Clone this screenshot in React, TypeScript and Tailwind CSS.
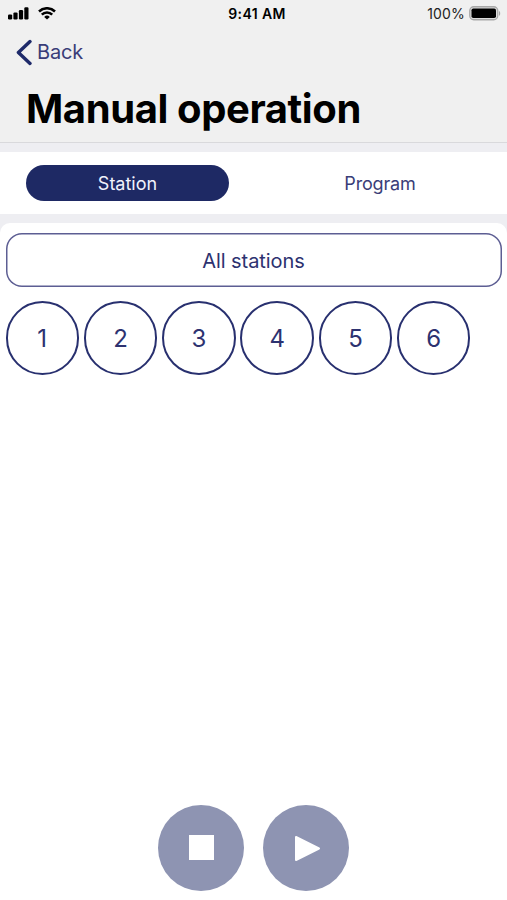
import React from "react";

const stations = [1, 2, 3, 4, 5, 6];

function StatusBar() {
  return (
    <div className="grid h-[27px] grid-cols-3 items-center pl-2 pr-[6px] text-black">
      <div className="flex items-center gap-[9px]">
        <svg width="21" height="13" viewBox="0 0 21 13" fill="currentColor">
          <rect x="0" y="7.4" width="4.2" height="5" rx="1.2" />
          <rect x="5.4" y="5.4" width="4.2" height="7" rx="1.2" />
          <rect x="10.9" y="3" width="4.2" height="9.4" rx="1.2" />
          <rect x="16.3" y="0.3" width="4.2" height="12.1" rx="1.2" />
        </svg>
        <svg width="18" height="13" viewBox="0 0 18 13" fill="none" stroke="currentColor" strokeWidth="2.5">
          <path d="M1 4.5a11.4 11.4 0 0 1 16 0" />
          <path d="M3.8 7.7a7.3 7.3 0 0 1 10.4 0" />
          <path d="M9 12.6 6.2 9.9a4 4 0 0 1 5.6 0Z" fill="currentColor" stroke="none" />
        </svg>
      </div>
      <div className="pl-[5px] text-center text-[14px] font-semibold tracking-[0.4px]">9:41 AM</div>
      <div className="flex items-center justify-end gap-1 text-[14px] tracking-[0.15px] text-[#222]">
        <span>100%</span>
        <svg width="32" height="15" viewBox="0 0 32 15">
          <rect x="0.75" y="0.75" width="28" height="13" rx="4" fill="#dcdcdc" stroke="#a8a8a8" strokeWidth="1.3" />
          <rect x="2.5" y="2.5" width="24.5" height="9.6" rx="1.8" fill="#000" />
          <path d="M30 5v4.8c1.6-.5 1.6-4.3 0-4.8Z" fill="#a5a5a5" />
        </svg>
      </div>
    </div>
  );
}

export default function App() {
  return (
    <div className="flex h-[900px] w-[507px] flex-col overflow-hidden bg-[#eeeef2] font-['Inter',sans-serif] text-[#2d3270]">
      <header className="h-[143px] shrink-0 border-b border-[#d9d9dc] bg-[#f0f0f0]">
        <StatusBar />
        <button className="ml-4 mt-[10px] flex h-[30px] items-center gap-[5px]">
          <svg width="16" height="27" viewBox="0 0 16 27" fill="none" stroke="#1e2a6a" strokeWidth="3.4" strokeLinecap="round" strokeLinejoin="round">
            <path d="M14 2.6 2.4 13.5 14 24.4" />
          </svg>
          <span className="text-[20px] tracking-[-0.2px] text-[#3a3d78]">Back</span>
        </button>
        <h1 className="ml-[26px] mt-[17px] whitespace-nowrap text-[40px] font-bold leading-[50px] tracking-[-0.4px] text-black">
          Manual operation
        </h1>
      </header>

      <nav className="mt-[9px] grid h-[62px] shrink-0 grid-cols-2 items-center bg-white px-[26px] text-[18px]">
        <button className="h-[36px] w-[203px] rounded-full bg-[#1e2964] text-[#f0f2fc]">Station</button>
        <button className="h-[36px] w-[203px] justify-self-end pl-px tracking-[-0.15px] text-[#3a3d78]">Program</button>
      </nav>

      <main className="mt-[9px] flex min-h-0 flex-1 flex-col rounded-t-[10px] bg-white px-[5.5px] pt-[10px]">
        <button className="h-[54px] w-full shrink-0 rounded-[16px] pt-px text-[20px] tracking-[-0.05px] shadow-[inset_0_0_0_1.5px_#5d5e93]">
          All stations
        </button>
        <div className="mt-[14px] flex gap-[4.8px]">
          {stations.map((station) => (
            <button key={station} className="size-[73.5px] shrink-0 rounded-full border-2 border-[#28306f] pt-[2px] text-[24px]">
              {station}
            </button>
          ))}
        </div>
        <div className="mb-[9.5px] mt-auto flex justify-center gap-[19.5px]">
          <button aria-label="Stop" className="grid size-[85.5px] place-items-center rounded-full bg-[#8e94b2]">
            <span className="size-[25px] bg-white" />
          </button>
          <button aria-label="Play" className="grid size-[85.5px] place-items-center rounded-full bg-[#8e94b2]">
            <svg width="27" height="28" viewBox="0 0 27 28" fill="#fff" stroke="#fff" strokeWidth="2" strokeLinejoin="round">
              <path d="M3 3v23L26 14.5Z" />
            </svg>
          </button>
        </div>
      </main>
    </div>
  );
}
